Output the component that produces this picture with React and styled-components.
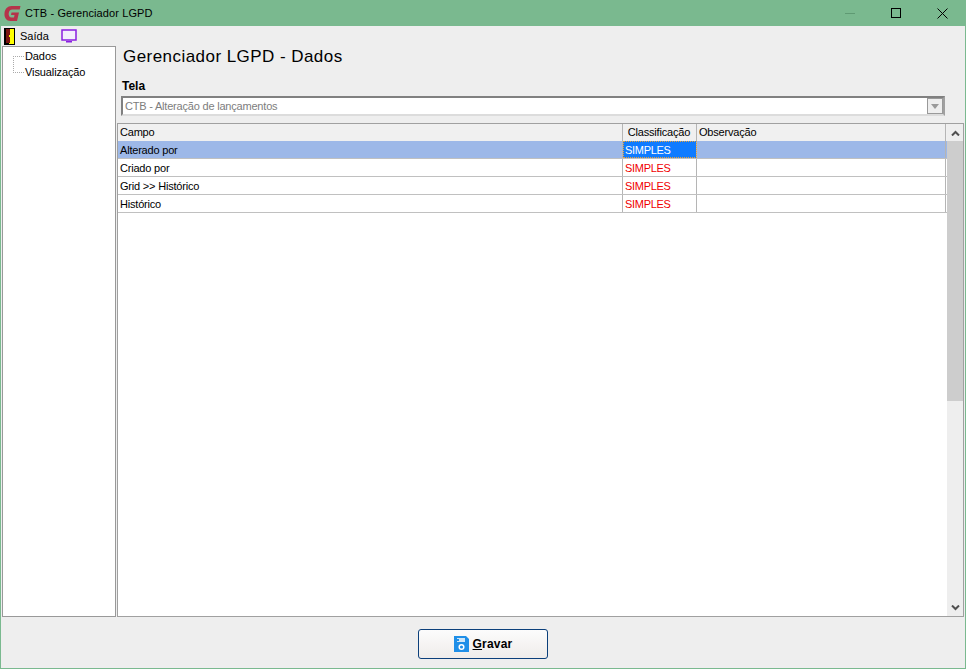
import React from "react";
import styled, { createGlobalStyle } from "styled-components";

const Global = createGlobalStyle`
    html, body {
        margin: 0;
        padding: 0;
        background: #eeeeee;
    }
    body {
        font-family: "Liberation Sans", Arial, sans-serif;
        font-size: 11px;
        color: #000;
    }
`;

const Window = styled.div`
    width: 966px;
    height: 669px;
    box-sizing: border-box;
    display: flex;
    flex-direction: column;
    background: #eeeeee;
    border: solid #7ab98f;
    border-width: 0 1px 1px 1px;
    padding: 0 1px;
    overflow: hidden;
`;

const TitleBar = styled.div`
    height: 26px;
    margin: 0 -2px;
    flex: none;
    display: flex;
    align-items: center;
    background: #7ab98f;
    padding-left: 4px;
`;

const TitleText = styled.span`
    margin-left: 4px;
    font-size: 11px;
    letter-spacing: 0.1px;
`;

const WinButtons = styled.div`
    margin-left: auto;
    padding-right: 1px;
    display: flex;
    align-items: center;
`;

const WinButton = styled.div`
    width: 46px;
    height: 26px;
    display: flex;
    align-items: center;
    justify-content: center;
`;

const Toolbar = styled.div`
    height: 20px;
    flex: none;
    display: flex;
    align-items: center;
    padding-left: 2px;
`;

const ExitLabel = styled.span`
    margin-left: 5px;
    margin-right: 12px;
`;

const Body = styled.div`
    height: 571px;
    flex: none;
    display: flex;
    gap: 1px;
`;

const Tree = styled.div`
    width: 114px;
    box-sizing: border-box;
    background: #fff;
    border: 1px solid #999;
    padding-top: 1px;
`;

const TreeItem = styled.div`
    height: 16px;
    line-height: 16px;
    padding-left: 22px;
    letter-spacing: -0.1px;
    position: relative;

    &::before {
        content: "";
        position: absolute;
        left: 10px;
        top: ${(p) => (p.$first ? "8px" : "-8px")};
        height: ${(p) => (p.$first ? "0" : "16px")};
        width: 10px;
        border-bottom: 1px dotted #aaa;
        border-left: 1px dotted #aaa;
    }
`;

const Main = styled.div`
    flex: 1;
    min-width: 0;
    display: flex;
    flex-direction: column;
`;

const Heading = styled.h1`
    margin: 0;
    height: 33px;
    padding-left: 6px;
    font-size: 17px;
    font-weight: 400;
    line-height: 22px;
    letter-spacing: 0.45px;
`;

const FieldLabel = styled.label`
    height: 17px;
    padding-left: 5px;
    font-size: 12px;
    font-weight: 700;
    line-height: 14px;
`;

const Select = styled.div`
    width: 824px;
    height: 20px;
    margin-left: 4px;
    box-sizing: border-box;
    display: flex;
    align-items: center;
    justify-content: space-between;
    background: #fff;
    border: 2px solid #808080;
    border-right-color: #a0a0a0;
    border-bottom-color: #dcdcdc;
    color: #7d7d7d;
    padding-left: 2px;
    letter-spacing: -0.2px;
`;

const SelectArrow = styled.div`
    width: 16px;
    height: 16px;
    display: flex;
    align-items: center;
    justify-content: center;
    background: #eeeeee;
    border: 1px solid #999;
    box-sizing: border-box;
`;

const GridWrap = styled.div`
    margin-top: 7px;
    flex: 1;
    min-height: 0;
    display: flex;
    background: #fff;
    border: 1px solid #a0a0a0;
`;

const GridArea = styled.div`
    flex: 1;
    min-width: 0;
`;

const Row = styled.div`
    display: grid;
    grid-template-columns: 505px 74px 249px;
    height: ${(p) => (p.$header ? "17px" : "18px")};
    box-sizing: border-box;
    border-bottom: ${(p) => (p.$header ? "0" : "1px solid #c0c0c0")};
    background: ${(p) => (p.$header ? "#f0f0f0" : p.$selected ? "#9db8e8" : "#fff")};
`;

const Cell = styled.div`
    box-sizing: border-box;
    padding-left: 2px;
    line-height: 17px;
    letter-spacing: -0.2px;
    border-right: 1px solid #b5b5b5;
    white-space: nowrap;
    overflow: hidden;
`;

const BodyCell = styled(Cell)`
    padding-top: 1px;
`;

const ClassCell = styled(BodyCell)`
    color: ${(p) => (p.$selected ? "#fff" : "#f00000")};
    background: ${(p) => (p.$selected ? "#0f7bff" : "transparent")};
    outline: ${(p) => (p.$selected ? "1px dotted #e8a33a" : "none")};
    outline-offset: -1px;
    letter-spacing: -0.3px;
`;

const ScrollBar = styled.div`
    width: 16px;
    flex: none;
    display: flex;
    flex-direction: column;
    background: #eeeeee;
`;

const ScrollButton = styled.div`
    height: 17px;
    flex: none;
    display: flex;
    align-items: center;
    justify-content: center;
`;

const ScrollThumb = styled.div`
    height: 260px;
    flex: none;
    background: #cdcdcd;
`;

const ScrollTrack = styled.div`
    flex: 1;
`;

const Footer = styled.div`
    flex: 1;
    display: flex;
    justify-content: center;
    align-items: flex-start;
    padding-top: 12px;
`;

const SaveButton = styled.button`
    width: 130px;
    height: 30px;
    display: flex;
    align-items: center;
    justify-content: center;
    gap: 4px;
    padding: 0;
    font-family: "Liberation Sans", Arial, sans-serif;
    font-size: 12px;
    font-weight: 700;
    letter-spacing: 0.2px;
    color: #000;
    background: linear-gradient(#fcfcfc, #efecea);
    border: 1px solid #0b3f7a;
    border-radius: 3px;

    u {
        text-decoration: underline;
    }
`;

const rows = ["Alterado por", "Criado por", "Grid >> Histórico", "Histórico"];

function AppLogo() {
    return (
        <svg width="17" height="17" viewBox="0 0 17 17">
            <path d="M16.500 1H7.500C3.500 1 1 4 .5 8c-.5 4.500 2 8 6 8h6.500L15 7.500H7.500L7 10h3.500l-.5 2.500H7.500c-2 0-3-1.800-2.800-4C5 6 6.200 4.500 8.500 4.500h7.200z" fill="#b5344a" />
        </svg>
    );
}

function ExitIcon() {
    return (
        <svg width="11" height="17" viewBox="0 0 11 17">
            <rect x="0" y="0" width="11" height="17" fill="#000" />
            <rect x="5" y="1" width="5" height="15" fill="#ffff00" />
            <rect x="2" y="1" width="4" height="14" fill="#7a1410" />
            <rect x="5" y="7" width="1" height="2" fill="#ffff00" />
        </svg>
    );
}

function MonitorIcon() {
    return (
        <svg width="16" height="14" viewBox="0 0 16 14">
            <rect x="1" y="1" width="14" height="10" fill="#f4eefc" stroke="#8a1fe0" strokeWidth="1.500" />
            <rect x="5" y="12" width="6" height="1.500" fill="#8a1fe0" />
        </svg>
    );
}

function SaveIcon() {
    return (
        <svg width="15" height="16" viewBox="0 0 15 16">
            <path d="M0 0h12l3 3v13H0z" fill="#1f8fe8" />
            <rect x="3" y="2" width="8" height="4" fill="#cfe6f8" />
            <rect x="3" y="3" width="2" height="2" fill="#1f8fe8" />
            <circle cx="7.500" cy="11" r="2.300" fill="none" stroke="#fff" strokeWidth="1.500" />
        </svg>
    );
}

function Chevron({ up }) {
    return (
        <svg width="9" height="6" viewBox="0 0 9 6">
            <path d={up ? "M1 5.500L4.500 2 8 5.500" : "M1 .5L4.500 4 8 .5"} fill="none" stroke="#505050" strokeWidth="2" />
        </svg>
    );
}

export default function App() {
    return (
        <>
            <Global />
            <Window>
                <TitleBar>
                    <AppLogo />
                    <TitleText>CTB - Gerenciador LGPD</TitleText>
                    <WinButtons>
                        <WinButton>
                            <svg width="11" height="11" viewBox="0 0 11 11">
                                <rect x="0" y="5" width="10" height="1" fill="#5f9a73" />
                            </svg>
                        </WinButton>
                        <WinButton>
                            <svg width="11" height="11" viewBox="0 0 11 11">
                                <rect x="0.5" y="0.5" width="9" height="9" fill="none" stroke="#000" />
                            </svg>
                        </WinButton>
                        <WinButton>
                            <svg width="11" height="11" viewBox="0 0 11 11">
                                <path d="M0.500 0.500L10.500 10.500M10.500 0.500L0.500 10.500" stroke="#000" />
                            </svg>
                        </WinButton>
                    </WinButtons>
                </TitleBar>
                <Toolbar>
                    <ExitIcon />
                    <ExitLabel>Saída</ExitLabel>
                    <MonitorIcon />
                </Toolbar>
                <Body>
                    <Tree>
                        <TreeItem $first>Dados</TreeItem>
                        <TreeItem>Visualização</TreeItem>
                    </Tree>
                    <Main>
                        <Heading>Gerenciador LGPD - Dados</Heading>
                        <FieldLabel>Tela</FieldLabel>
                        <Select>
                            CTB - Alteração de lançamentos
                            <SelectArrow>
                                <svg width="8" height="5" viewBox="0 0 8 5">
                                    <path d="M0 0h8L4 5z" fill="#9a9a9a" />
                                </svg>
                            </SelectArrow>
                        </Select>
                        <GridWrap>
                            <GridArea>
                                <Row $header>
                                    <Cell>Campo</Cell>
                                    <Cell>&nbsp;Classificação</Cell>
                                    <Cell>Observação</Cell>
                                </Row>
                                {rows.map((name, i) => (
                                    <Row key={name} $selected={i === 0}>
                                        <BodyCell>{name}</BodyCell>
                                        <ClassCell $selected={i === 0}>SIMPLES</ClassCell>
                                        <BodyCell />
                                    </Row>
                                ))}
                            </GridArea>
                            <ScrollBar>
                                <ScrollButton>
                                    <Chevron up />
                                </ScrollButton>
                                <ScrollThumb />
                                <ScrollTrack />
                                <ScrollButton>
                                    <Chevron />
                                </ScrollButton>
                            </ScrollBar>
                        </GridWrap>
                    </Main>
                </Body>
                <Footer>
                    <SaveButton>
                        <SaveIcon />
                        <span><u>G</u>ravar</span>
                    </SaveButton>
                </Footer>
            </Window>
        </>
    );
}
